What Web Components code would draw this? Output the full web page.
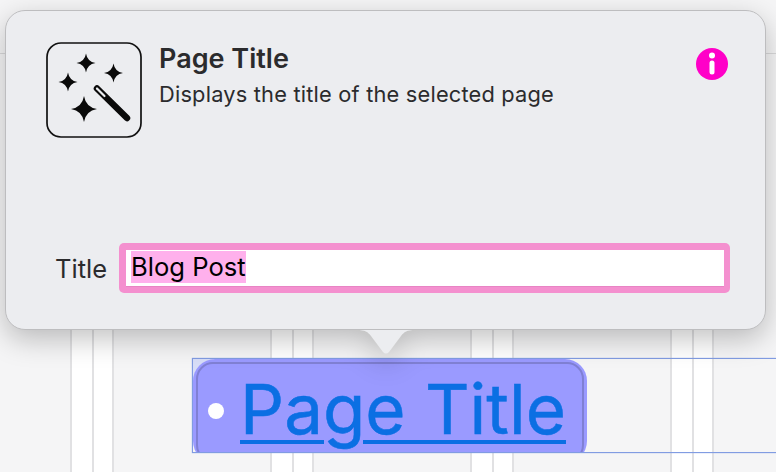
<!DOCTYPE html>
<html>
<head>
<meta charset="utf-8">
<title>Page Title</title>
<style>
html,body{margin:0;padding:0;background:#f5f5f6;}
body{width:776px;height:472px;overflow:hidden;position:relative;font-family:Inter,"Liberation Sans",sans-serif;}
</style>
</head>
<body>

<page-canvas>
  <title-block>Page Title</title-block>
</page-canvas>

<block-popover heading="Page Title" text="Displays the title of the selected page">
  <title-field label="Title" value="Blog Post"></title-field>
</block-popover>

<script>
class PageCanvas extends HTMLElement{
  constructor(){
    super();
    this.attachShadow({mode:"open"}).innerHTML = `
<style>
:host{display:block;height:472px;background:#f5f5f6;}
.top{height:54px;border-bottom:1px solid #d9d9da;box-sizing:border-box;}
.body{
  height:418px;
  padding-top:304px;
  box-sizing:border-box;
  background-image:
    linear-gradient(90deg,transparent 70px,#e1e1e3 70px,#e1e1e3 72px,#fff 72px,#fff 92px,#e1e1e3 92px,#e1e1e3 94px,#fff 94px,#fff 112px,#e1e1e3 112px,#e1e1e3 114px,transparent 114px);
  background-size:200px 100%;
}
</style>
<div class="top"></div>
<div class="body"><slot></slot></div>`;
  }
}

class TitleBlock extends HTMLElement{
  constructor(){
    super();
    this.attachShadow({mode:"open"}).innerHTML = `
<style>
:host{
  display:block;margin-left:192px;height:93px;box-sizing:content-box;
  border:1px solid #819ce2;border-right:0;overflow:hidden;
  box-shadow:0 0 1px #8fa6e6;
  background:linear-gradient(#d8def8,#d8def8) no-repeat 0 0/20px 20px;
}
.pill{
  width:394px;height:104px;box-sizing:border-box;
  background:#9a9aff;border-radius:22px;
  padding:3px 3px 0 3px;
}
.inner{
  height:100px;box-sizing:border-box;
  border:2px solid #8080d4;border-radius:17px;
  display:flex;align-items:flex-start;
  padding:5px 0 0 10px;
}
.dot{width:16px;height:16px;border-radius:50%;background:#fff;margin:34px 16px 0 0;flex:none;}
.txt{
  font:400 69.1px/80px Inter,"Liberation Sans",sans-serif;
  color:#0b6fe3;
  -webkit-text-stroke:.5px #0b6fe3;
  text-decoration:underline;
  text-decoration-thickness:4px;
  text-underline-offset:6px;
  white-space:nowrap;
}
</style>
<div class="pill"><div class="inner"><span class="dot"></span><span class="txt"><slot></slot></span></div></div>`;
  }
}

class BlockIcon extends HTMLElement{
  constructor(){
    super();
    const star = (x,y,r) => {
      const a = r*0.14;
      return `M${x} ${y-r}Q${x+a} ${y-a} ${x+r} ${y}Q${x+a} ${y+a} ${x} ${y+r}Q${x-a} ${y+a} ${x-r} ${y}Q${x-a} ${y-a} ${x} ${y-r}Z`;
    };
    this.attachShadow({mode:"open"}).innerHTML = `
<style>
:host{display:block;width:96px;height:96px;flex:none;}
svg{display:block;}
</style>
<svg width="96" height="96" viewBox="0 0 96 96">
  <rect x="1" y="1" width="94" height="94" rx="14" fill="none" stroke="#111" stroke-width="1.7"/>
  <path fill="#0a0a0a" d="${star(40,21,9.5)} ${star(67.5,31,9.5)} ${star(22,40,9.5)} ${star(38,67,13)}"/>
  <path d="M51 46.5L81 76" stroke="#0a0a0a" stroke-width="6.5" stroke-linecap="round" fill="none"/>
  <path d="M51 46.5L58.5 54" stroke="#ecedf0" stroke-width="2.2" stroke-linecap="round" fill="none"/>
</svg>`;
  }
}

class InfoIcon extends HTMLElement{
  constructor(){
    super();
    this.attachShadow({mode:"open"}).innerHTML = `
<style>
:host{display:block;width:32px;height:32px;flex:none;}
svg{display:block;}
</style>
<svg width="32" height="32" viewBox="0 0 32 32">
  <circle cx="16" cy="16" r="16" fill="#ff00c8"/>
  <circle cx="16" cy="7.5" r="3" fill="#fff"/>
  <rect x="13.5" y="12.5" width="5" height="14" rx="2.5" fill="#fff"/>
</svg>`;
  }
}

class TitleField extends HTMLElement{
  constructor(){
    super();
    const label = this.getAttribute("label");
    const value = this.getAttribute("value");
    this.attachShadow({mode:"open"}).innerHTML = `
<style>
:host{display:flex;align-items:center;gap:13px;padding-left:9px;margin-right:-2px;}
.lbl{width:51px;padding-top:2px;font:400 25.5px/30px Inter,"Liberation Sans",sans-serif;color:#2b2b2d;white-space:nowrap;}
.ring{flex:1;height:50px;box-sizing:border-box;background:#f490cf;border-radius:5px;padding:7px 6px 6px 7px;}
.input{height:37px;box-sizing:border-box;background:#fff;border-bottom:1px solid #e884c4;padding:1px 0 0 5px;}
.sel{display:inline-block;height:32px;font:400 25.6px/32px Inter,"Liberation Sans",sans-serif;color:#000;background:#ffb0ec;}
</style>
<span class="lbl">${label}</span>
<div class="ring"><div class="input"><span class="sel">${value}</span></div></div>`;
  }
}

class BlockPopover extends HTMLElement{
  constructor(){
    super();
    const heading = this.getAttribute("heading");
    const text = this.getAttribute("text");
    this.attachShadow({mode:"open"}).innerHTML = `
<style>
:host{
  display:block;position:absolute;left:5px;top:10px;width:761px;height:320px;
  filter:drop-shadow(0 9px 14px rgba(0,0,0,.24));
}
.panel{
  height:320px;box-sizing:border-box;
  background:#ecedf0;border:1px solid #bdbdbf;border-radius:20px;
  padding:31px 37px 36px 40px;
  display:flex;flex-direction:column;justify-content:space-between;
}
.head{display:flex;align-items:flex-start;}
.copy{flex:1;padding:0 0 0 17px;color:#2b2b2d;}
h1{margin:0;font:600 27px/34px Inter,"Liberation Sans",sans-serif;}
p{margin:4px 0 0;font:400 21.8px/28px Inter,"Liberation Sans",sans-serif;letter-spacing:.2px;}
info-icon{margin-top:6px;}
.arrow{position:absolute;left:352px;top:319px;display:block;}
</style>
<div class="panel">
  <div class="head">
    <block-icon></block-icon>
    <div class="copy"><h1>${heading}</h1><p>${text}</p></div>
    <info-icon></info-icon>
  </div>
  <slot></slot>
</div>
<svg class="arrow" width="58" height="26" viewBox="0 0 58 26">
  <path d="M0 1C8 1 11 3 14 7L26 23Q29 26 32 23L44 7C47 3 50 1 58 1Z" fill="#ecedf0"/>
</svg>`;
  }
}

customElements.define("info-icon",InfoIcon);
customElements.define("block-icon",BlockIcon);
customElements.define("title-field",TitleField);
customElements.define("block-popover",BlockPopover);
customElements.define("title-block",TitleBlock);
customElements.define("page-canvas",PageCanvas);
</script>
</body>
</html>
